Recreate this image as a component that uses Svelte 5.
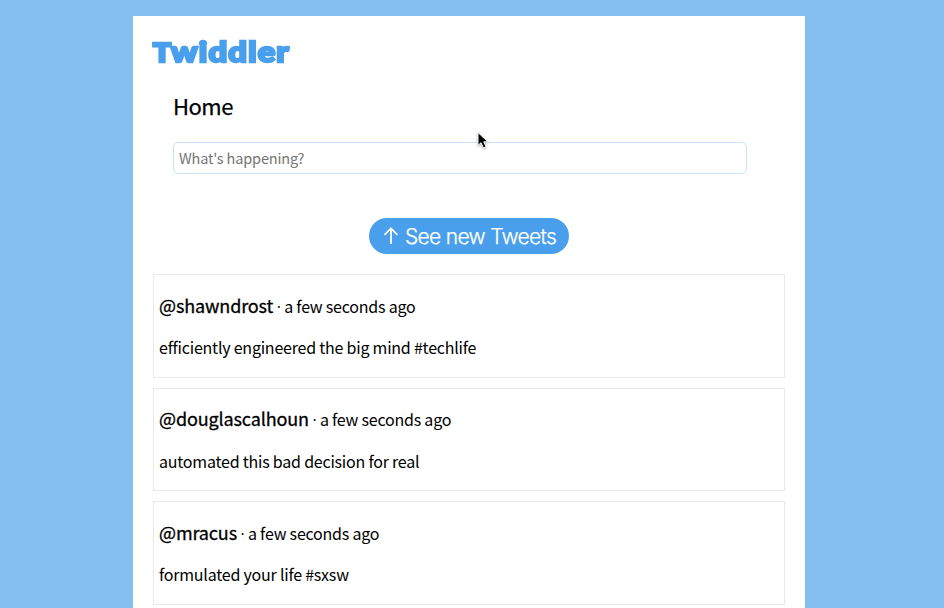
<script>
  const tweets = [
    { user: 'shawndrost', message: 'efficiently engineered the big mind #techlife' },
    { user: 'douglascalhoun', message: 'automated this bad decision for real' },
    { user: 'mracus', message: 'formulated your life #sxsw' }
  ];
</script>

<div class="page">
  <main>
    <h1><span class="initial">T</span><span>widdler</span></h1>
    <section class="compose">
      <h2>Home</h2>
      <input type="text" placeholder="What's happening?" />
    </section>
    <button>
      <svg width="16" height="20" viewBox="0 0 16 20" fill="none" stroke="currentColor" stroke-width="1.8" stroke-linecap="round" stroke-linejoin="round">
        <path d="M8 17.2V2.4M2 8.4L8 2.4l6 6" />
      </svg>
      <span>See new Tweets</span>
    </button>
    <div class="feed">
      {#each tweets as tweet}
        <article>
          <p class="meta"><span class="user">@{tweet.user}</span><span class="dot">·</span><span class="time">a few seconds ago</span></p>
          <p class="message">{tweet.message}</p>
        </article>
      {/each}
    </div>
  </main>
  <svg class="cursor" width="14" height="20" viewBox="0 0 14 20">
    <path d="M2 1.5v13l3-2.8 2.4 5.2 2.7-1.2-2.4-4.9h4.2z" fill="#000" stroke="#fff" stroke-width="1" />
  </svg>
</div>

<style>
  :global(body) { margin: 0; background: #85bef1; }
  .page {
    box-sizing: border-box;
    position: relative;
    height: 608px;
    padding: 16px 139px 0 133px;
    overflow: hidden;
    background: #85bef1;
    color: #000;
    font-family: "Noto Sans CJK SC", sans-serif;
  }
  main { box-sizing: border-box; height: 700px; padding: 14px 20px 0; background: #fff; }
  h1 {
    margin: 0;
    height: 42px;
    line-height: 42px;
    font-family: Lato, sans-serif;
    font-size: 28.5px;
    font-weight: 900;
    letter-spacing: 1px;
    color: #4a9fec;
    transform: scaleX(1.15);
    transform-origin: 0 0;
    -webkit-text-stroke: 2.4px #4a9fec;
  }
  .initial { font-size: 26px; letter-spacing: 0; }
  .compose { padding: 16px 38px 0 20px; }
  h2 {
    margin: 0 0 19px;
    height: 35px;
    line-height: 35px;
    font-size: 22px;
    font-weight: 400;
    letter-spacing: -0.5px;
    -webkit-text-stroke: 0.25px #000;
  }
  input {
    display: block;
    box-sizing: border-box;
    width: 574px;
    height: 32px;
    margin: 0;
    padding: 0 5px 1px;
    border: 1px solid #c8e1f8;
    border-radius: 5px;
    outline: none;
    background: #fff;
    font: 14.5px "Noto Sans CJK SC", sans-serif;
    letter-spacing: -0.16px;
  }
  input::placeholder { color: #757575; opacity: 1; }
  button {
    display: flex;
    align-items: center;
    gap: 6px;
    box-sizing: border-box;
    width: 200px;
    height: 36px;
    margin: 44px auto 20px;
    padding: 0 0 0 14px;
    border: 0;
    border-radius: 18px;
    background: #4a9fec;
    color: #fff;
    font: 300 21px Inter, sans-serif;
    letter-spacing: -0.69px;
    white-space: nowrap;
    -webkit-text-stroke: 0.25px #fff;
  }
  button svg { flex: none; }
  article {
    box-sizing: border-box;
    height: 103.5px;
    margin-bottom: 10px;
    padding: 14.6px 5px 0;
    border: 1px solid #e6eaed;
  }
  p {
    margin: 0;
    height: 30px;
    line-height: 30px;
    white-space: nowrap;
    font-size: 16px;
    letter-spacing: -0.22px;
  }
  .meta { display: flex; align-items: baseline; margin-bottom: 12.5px; }
  .user { font-size: 18px; letter-spacing: -0.13px; -webkit-text-stroke: 0.3px #000; }
  .dot { width: 11px; text-align: center; font-family: "Open Sans", sans-serif; }
  .cursor { position: absolute; left: 476px; top: 131px; filter: drop-shadow(0 1px 1px rgba(0, 0, 0, 0.3)); }
</style>
